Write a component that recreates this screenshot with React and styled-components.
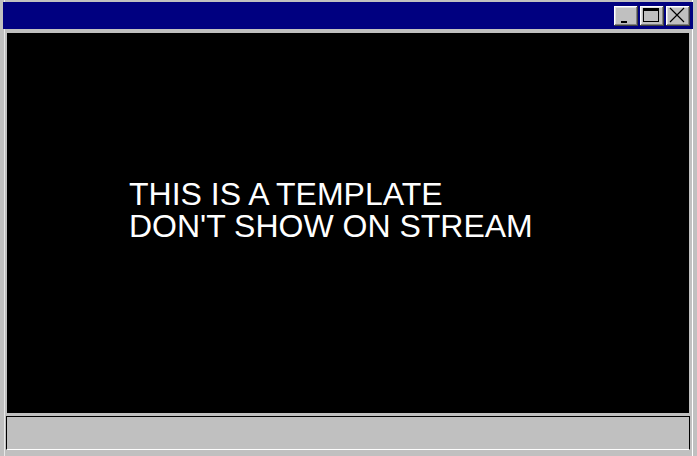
import React from "react";
import styled, { createGlobalStyle } from "styled-components";

const Global = createGlobalStyle`
  html, body { margin: 0; padding: 0; background: #c0c0c0; }
  #root { width: 697px; height: 456px; }
`;

const Window = styled.div`
  box-sizing: border-box;
  width: 697px;
  height: 456px;
  display: flex;
  flex-direction: column;
  padding: 2px 4px 6px 3px;
  background: #c0c0c0;
  box-shadow: inset -4px 0 0 #c0c0c0, inset -5px 0 0 #ffffff,
    inset 4px 0 0 #c0c0c0, inset 5px 0 0 #e8e8e8;
`;

const TitleBar = styled.div`
  height: 27px;
  flex: none;
  background: #000080;
  display: flex;
  justify-content: flex-end;
  align-items: flex-start;
  padding: 4px 3px 0 0;
  box-sizing: border-box;
  gap: 2px;
`;

const TitleButton = styled.button`
  flex: none;
  box-sizing: border-box;
  width: 24px;
  min-width: 24px;
  height: 20px;
  padding: 0;
  margin: 0;
  border: none;
  font-size: 0;
  line-height: 0;
  background: #c0c0c0;
  box-shadow: inset -1px -1px #404040, inset 1px 1px #ffffff,
    inset -2px -2px #808080, inset 2px 2px #dfdfdf;
  display: block;
  svg { display: block; width: 24px; height: 20px; }
`;

const Screen = styled.div`
  flex: none;
  height: 380px;
  margin: 4px 4px 0 4px;
  background: #000000;
  color: #ffffff;
  font-family: "Liberation Sans", Arial, sans-serif;
  font-size: 32px;
  line-height: 32px;
  padding: 145px 0 0 122px;
  box-sizing: border-box;
`;

const Caption = styled.div`
  white-space: nowrap;
`;

const StatusBar = styled.div`
  flex: none;
  height: 34px;
  margin: 3px 3px 0 3px;
  box-sizing: border-box;
  background: #c0c0c0;
  border-top: 1px solid #000;
  border-left: 1px solid #000;
  border-right: 1px solid #000;
  border-bottom: 1px solid #fff;
`;

export default function App() {
  return (
    <>
      <Global />
      <Window>
        <TitleBar>
          <TitleButton aria-label="minimize">
            <svg viewBox="0 0 24 20">
              <rect x="7" y="15" width="6" height="2" fill="#000" />
            </svg>
          </TitleButton>
          <TitleButton aria-label="maximize">
            <svg viewBox="0 0 24 20">
              <rect x="3.5" y="2.5" width="15" height="13" fill="none" stroke="#000" strokeWidth="1" />
              <rect x="3" y="2" width="16" height="3" fill="#000" />
            </svg>
          </TitleButton>
          <TitleButton aria-label="close">
            <svg viewBox="0 0 24 20">
              <path d="M4 2 L18 16 M18 2 L4 16" stroke="#000" strokeWidth="1.2" fill="none" />
            </svg>
          </TitleButton>
        </TitleBar>
        <Screen>
          <Caption>
            THIS IS A TEMPLATE
            <br />
            DON'T SHOW ON STREAM
          </Caption>
        </Screen>
        <StatusBar />
      </Window>
    </>
  );
}
